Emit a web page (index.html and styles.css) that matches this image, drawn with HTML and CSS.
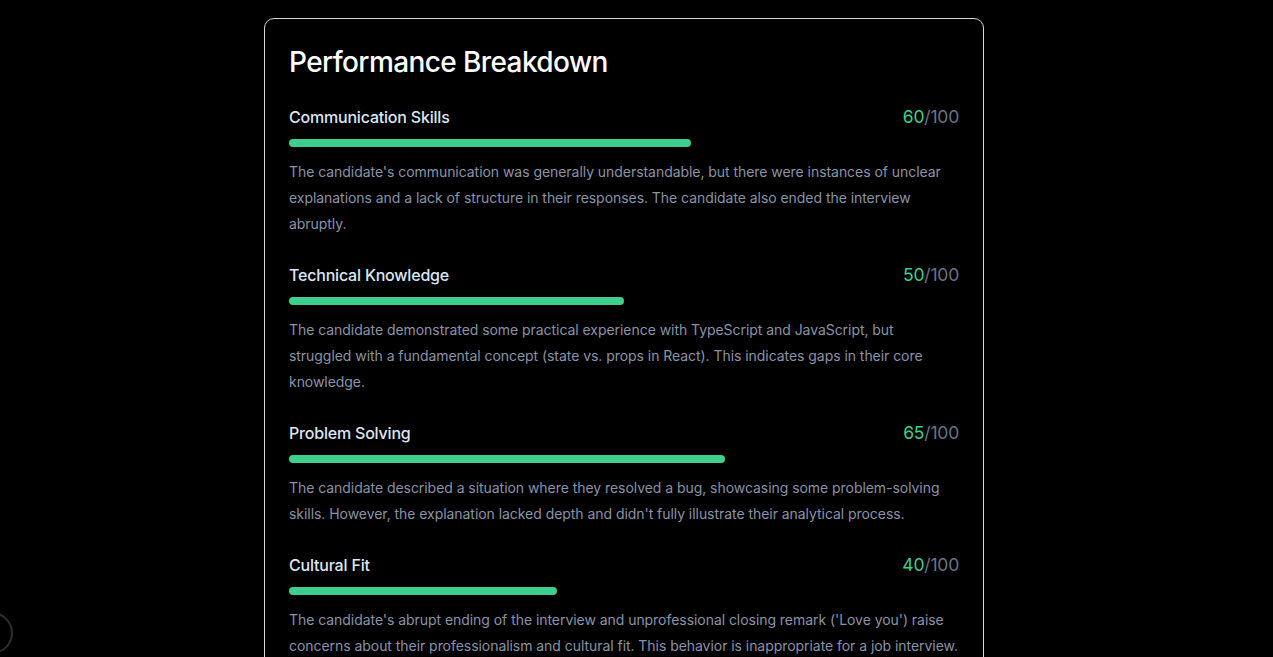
FILE: index.html
```html
<!DOCTYPE html>
<html lang="en">
<head>
<meta charset="utf-8">
<title>Performance Breakdown</title>
<link rel="stylesheet" href="styles.css">
</head>
<body>
<main class="page">
  <section class="card">
    <h2 class="card-title">Performance Breakdown</h2>

    <div class="metric">
      <div class="metric-head">
        <span class="metric-name">Communication Skills</span>
        <span class="metric-score"><span class="score-value">60</span>/100</span>
      </div>
      <div class="bar"><div class="bar-fill" style="width:60%"></div></div>
      <p class="metric-desc">The candidate's communication was generally understandable, but there were instances of unclear explanations and a lack of structure in their responses. The candidate also ended the interview abruptly.</p>
    </div>

    <div class="metric">
      <div class="metric-head">
        <span class="metric-name">Technical Knowledge</span>
        <span class="metric-score"><span class="score-value">50</span>/100</span>
      </div>
      <div class="bar"><div class="bar-fill" style="width:50%"></div></div>
      <p class="metric-desc">The candidate demonstrated some practical experience with TypeScript and JavaScript, but struggled with a fundamental concept (state vs. props in React). This indicates gaps in their core knowledge.</p>
    </div>

    <div class="metric">
      <div class="metric-head">
        <span class="metric-name">Problem Solving</span>
        <span class="metric-score"><span class="score-value">65</span>/100</span>
      </div>
      <div class="bar"><div class="bar-fill" style="width:65%"></div></div>
      <p class="metric-desc">The candidate described a situation where they resolved a bug, showcasing some problem-solving skills. However, the explanation lacked depth and didn't fully illustrate their analytical process.</p>
    </div>

    <div class="metric">
      <div class="metric-head">
        <span class="metric-name">Cultural Fit</span>
        <span class="metric-score"><span class="score-value">40</span>/100</span>
      </div>
      <div class="bar"><div class="bar-fill" style="width:40%"></div></div>
      <p class="metric-desc">The candidate's abrupt ending of the interview and unprofessional closing remark ('Love you') raise concerns about their professionalism and cultural fit. This behavior is inappropriate for a job interview.</p>
    </div>
  </section>
</main>
<button class="float-btn" aria-label="Menu"></button>
</body>
</html>
```

FILE: styles.css
```css
html, body {
  margin: 0;
  padding: 0;
  background: #000;
  overflow: hidden;
}

body {
  font-family: "Inter", "Noto Sans", sans-serif;
  color: #fff;
}

.page {
  display: flex;
  justify-content: center;
  padding: 18px 25px 0 0;
}

.card {
  width: 720px;
  box-sizing: border-box;
  border: 1px solid #d9d9d9;
  border-radius: 10px;
  background: #000;
  padding: 25px 24px 24px 24px;
}

.card-title {
  margin: 0 0 25px 0;
  font-size: 28px;
  line-height: 36px;
  font-weight: 500;
  letter-spacing: -0.6px;
  color: #fff;
}

.metric + .metric {
  margin-top: 26px;
}

.metric-head {
  display: flex;
  justify-content: space-between;
  align-items: center;
  line-height: 24px;
}

.metric-name {
  font-size: 16px;
  font-weight: 500;
  color: #dde6f5;
  letter-spacing: -0.2px;
}

.metric-score {
  font-size: 17.5px;
  color: #6b7386;
  letter-spacing: -0.2px;
}

.score-value {
  color: #3ecf8e;
}

.bar {
  margin-top: 10px;
  height: 8px;
  border-radius: 4px;
  background: #000;
}

.bar-fill {
  height: 100%;
  border-radius: 4px;
  background: #3ecf8e;
}

.metric-desc {
  margin: 12px 0 0 0;
  font-size: 14px;
  line-height: 26px;
  color: #8a93a6;
  letter-spacing: -0.05px;
}

.float-btn {
  position: fixed;
  left: -29px;
  top: 612px;
  width: 42px;
  height: 42px;
  border-radius: 50%;
  border: 2px solid #2e2e2e;
  background: #000;
  padding: 0;
}
```
